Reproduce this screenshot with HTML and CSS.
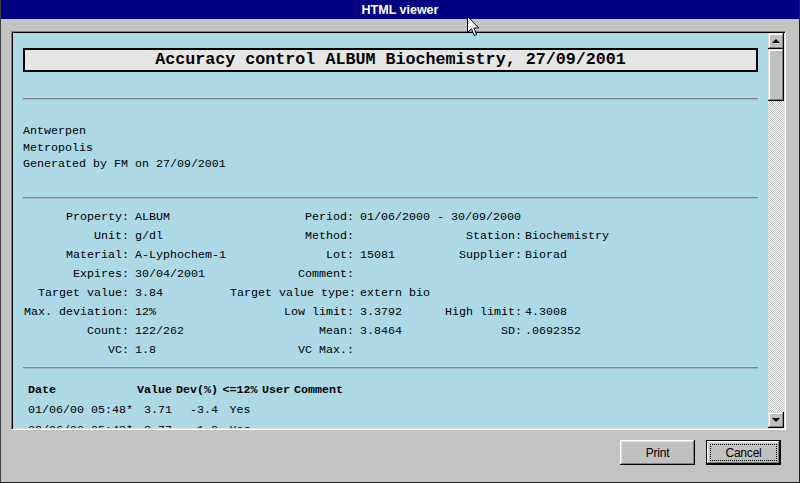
FILE: index.html
```html
<!DOCTYPE html>
<html>
<head>
<meta charset="utf-8">
<title>HTML viewer</title>
<link rel="stylesheet" href="styles.css">
</head>
<body>
<div class="window">
  <div class="titlebar">HTML viewer</div>
  <div class="main">
    <div class="panel">
      <div class="viewport">
        <div class="doc">
          <div class="titlebox">Accuracy control ALBUM Biochemistry, 27/09/2001</div>
          <div class="rule rule-1"></div>
          <div class="address">
            <div>Antwerpen</div>
            <div>Metropolis</div>
            <div>Generated by FM on 27/09/2001</div>
          </div>
          <div class="rule rule-2"></div>
          <div class="props">
            <span class="l r">Property:</span><span class="v">ALBUM</span><span class="l">Period:</span><span class="v wide">01/06/2000 - 30/09/2000</span>
            <span class="l r">Unit:</span><span class="v">g/dl</span><span class="l">Method:</span><span class="v"></span><span class="l">Station:</span><span class="v3">Biochemistry</span>
            <span class="l r">Material:</span><span class="v">A-Lyphochem-1</span><span class="l">Lot:</span><span class="v">15081</span><span class="l">Supplier:</span><span class="v3">Biorad</span>
            <span class="l r">Expires:</span><span class="v">30/04/2001</span><span class="l">Comment:</span>
            <span class="l r">Target value:</span><span class="v">3.84</span><span class="l">Target value type:</span><span class="v wide">extern bio</span>
            <span class="l r">Max. deviation:</span><span class="v">12%</span><span class="l">Low limit:</span><span class="v">3.3792</span><span class="l">High limit:</span><span class="v3">4.3008</span>
            <span class="l r">Count:</span><span class="v">122/262</span><span class="l">Mean:</span><span class="v">3.8464</span><span class="l">SD:</span><span class="v3">.0692352</span>
            <span class="l r">VC:</span><span class="v">1.8</span><span class="l">VC Max.:</span>
          </div>
          <div class="rule rule-3"></div>
          <div class="data">
            <span class="h r">Date</span><span class="h ra">Value</span><span class="h ra">Dev(%)</span><span class="h ca">&lt;=12%</span><span class="h">User</span><span class="h">Comment</span>
            <span class="r">01/06/00 05:48*</span><span class="ra">3.71</span><span class="ra">-3.4</span><span class="ca">Yes</span>
            <span class="r">02/06/00 05:43*</span><span class="ra">3.77</span><span class="ra">-1.8</span><span class="ca">Yes</span>
          </div>
        </div>
      </div>
      <div class="scrollbar">
        <div class="sbtn"><span class="arrow-up"></span></div>
        <div class="track"><div class="thumb"></div></div>
        <div class="sbtn"><span class="arrow-down"></span></div>
      </div>
    </div>
    <div class="buttons">
      <div class="btn">Print</div>
      <div class="btn default"><span class="focus">Cancel</span></div>
    </div>
  </div>
  <svg class="cursor" width="13" height="21" viewBox="0 0 13 21">
    <path d="M0.5 0.5 V16.5 L4.5 12.8 L7.3 19.5 L9.6 18.5 L6.9 12 H11.7 Z" fill="#fff" stroke="#000" stroke-width="1"/>
  </svg>
</div>
</body>
</html>
```

FILE: styles.css
```css
html, body {
  margin: 0;
  padding: 0;
  background: #c0c0c0;
}

.window {
  position: relative;
  width: 800px;
  height: 483px;
  box-sizing: border-box;
  border-left: 1px solid #404040;
  border-right: 1px solid #202020;
  border-bottom: 1px solid #202020;
  background: #c3c3c3;
  display: flex;
  flex-direction: column;
  overflow: hidden;
}

.titlebar {
  height: 19px;
  background: #000080;
  color: #fff;
  font: bold 12.5px "Liberation Sans", Arial, sans-serif;
  display: flex;
  align-items: center;
  justify-content: center;
  flex-shrink: 0;
}

.main {
  flex: 1;
  display: flex;
  flex-direction: column;
  padding: 12px 0 0 10px;
}

.panel {
  width: 775px;
  height: 399px;
  box-sizing: border-box;
  border: 1px solid;
  border-color: #808080 #fff #fff #808080;
  padding: 1px;
  box-shadow: inset 1px 1px #000, inset -1px -1px #dfdfdf;
  display: flex;
}

.viewport {
  width: 755px;
  height: 395px;
  background: #add8e6;
  overflow: hidden;
}

.doc {
  padding: 15px 10px 0 10px;
  font-family: "Liberation Mono", "Courier New", monospace;
  font-size: 11.67px;
  color: #000;
}

.titlebox {
  height: 24px;
  box-sizing: border-box;
  border: 2px solid #000;
  background: #e6e6e6;
  font-weight: bold;
  font-size: 16.7px;
  line-height: 20px;
  text-align: center;
  white-space: nowrap;
}

.rule {
  height: 0;
  border-top: 1px solid #858585;
  border-bottom: 1px solid #a3bcc4;
}

.rule-1 { margin-top: 26px; }
.rule-2 { margin-top: 24.5px; }
.rule-3 { margin-top: 7.5px; }

.address {
  margin-top: 23px;
  line-height: 16.5px;
}

.props {
  margin-top: 8.5px;
  display: grid;
  grid-template-columns: 106px 101px 124px 87px 81px 1fr;
  grid-auto-rows: 19px;
  align-items: center;
  white-space: nowrap;
}

.props .l { text-align: right; }
.props .v { padding-left: 6px; }
.props .v3 { padding-left: 3px; }
.props .wide { grid-column: span 3; }
.props .r, .data .r { grid-column-start: 1; }

.data {
  margin-top: 11px;
  margin-left: 5px;
  display: grid;
  grid-template-columns: 106px 38px 46px 44px 32px 1fr;
  grid-auto-rows: 20px;
  align-items: center;
  white-space: nowrap;
}

.data .h { font-weight: bold; }
.data .ra { text-align: right; }
.data .ca { text-align: center; }

.scrollbar {
  width: 16px;
  height: 395px;
  display: flex;
  flex-direction: column;
}

.sbtn,
.thumb {
  background: #c0c0c0;
  box-shadow: inset -1px -1px #000, inset 1px 1px #dfdfdf, inset -2px -2px #808080, inset 2px 2px #fff;
}

.sbtn {
  height: 16px;
  flex-shrink: 0;
  display: flex;
  align-items: center;
  justify-content: center;
}

.arrow-up {
  width: 0;
  height: 0;
  border-left: 4px solid transparent;
  border-right: 4px solid transparent;
  border-bottom: 4px solid #000;
}

.arrow-down {
  width: 0;
  height: 0;
  border-left: 4px solid transparent;
  border-right: 4px solid transparent;
  border-top: 4px solid #000;
}

.track {
  flex: 1;
  background-color: #fff;
  background-image: conic-gradient(#c0c0c0 25%, #fff 0 50%, #c0c0c0 0 75%, #fff 0);
  background-size: 2px 2px;
}

.thumb {
  height: 52px;
}

.buttons {
  display: flex;
  justify-content: flex-end;
  gap: 11px;
  padding-right: 18px;
  margin-top: 10px;
}

.btn {
  width: 75px;
  height: 25px;
  box-sizing: border-box;
  background: #c0c0c0;
  box-shadow: inset -1px -1px #000, inset 1px 1px #fff, inset -2px -2px #808080, inset 2px 2px #dfdfdf;
  font: 12px "Liberation Sans", Arial, sans-serif;
  letter-spacing: -0.2px;
  color: #000;
  display: flex;
  align-items: center;
  justify-content: center;
}

.btn.default {
  border: 1px solid #000;
  padding: 3px;
}

.btn.default .focus {
  flex: 1;
  align-self: stretch;
  border: 1px dotted #000;
  display: flex;
  align-items: center;
  justify-content: center;
}

.cursor {
  position: absolute;
  left: 466px;
  top: 16px;
}
```
